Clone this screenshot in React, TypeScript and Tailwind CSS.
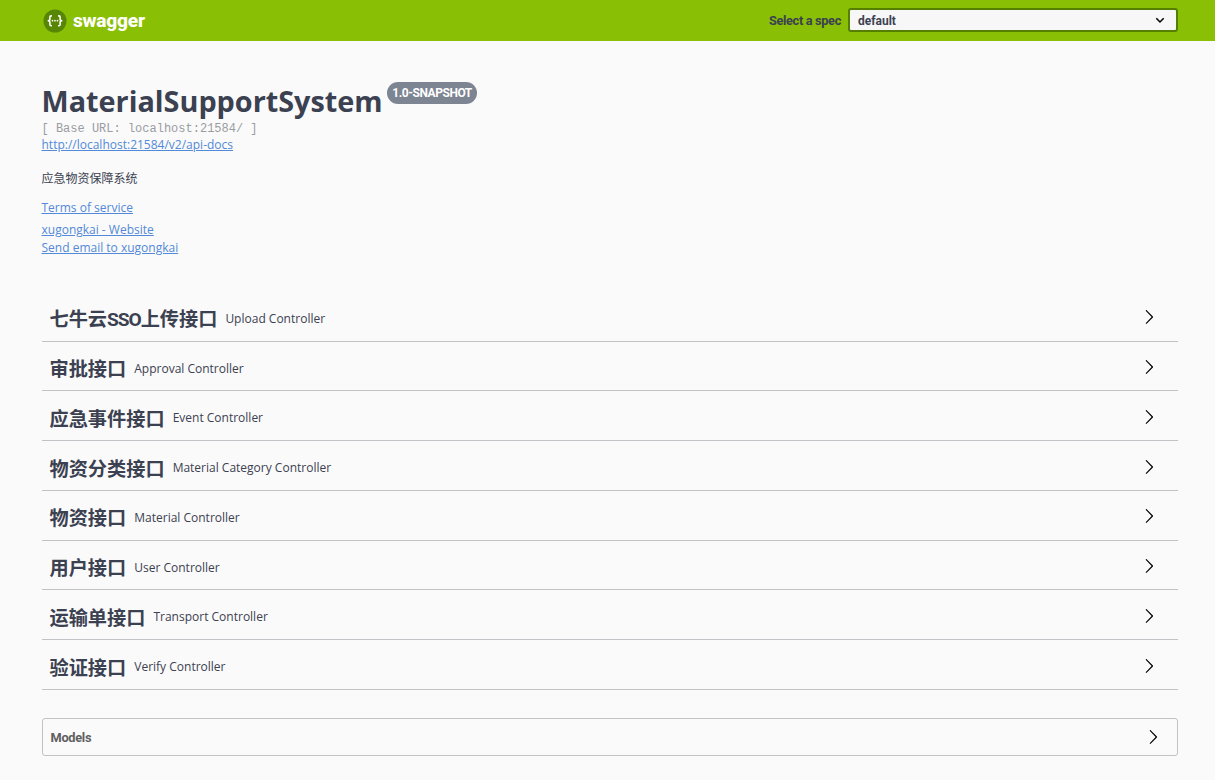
type Tag = { name: string; description: string };

const tags: Tag[] = [
  { name: '七牛云SSO上传接口', description: 'Upload Controller' },
  { name: '审批接口', description: 'Approval Controller' },
  { name: '应急事件接口', description: 'Event Controller' },
  { name: '物资分类接口', description: 'Material Category Controller' },
  { name: '物资接口', description: 'Material Controller' },
  { name: '用户接口', description: 'User Controller' },
  { name: '运输单接口', description: 'Transport Controller' },
  { name: '验证接口', description: 'Verify Controller' },
];

function Chevron() {
  return (
    <svg className="h-4 w-4 shrink-0" viewBox="0 0 20 20" fill="#000">
      <path d="M13.25 10L6.109 2.58c-.268-.27-.268-.707 0-.979.268-.27.701-.27.969 0l7.83 7.908c.268.271.268.709 0 .979l-7.83 7.908c-.268.271-.701.27-.969 0-.268-.269-.268-.707 0-.979L13.25 10z" />
    </svg>
  );
}

function Logo() {
  return (
    <a className="flex items-center">
      <svg className="size-6 shrink-0" viewBox="0 0 24 24" fill="none">
        <circle cx="12" cy="12" r="11.5" fill="#578504" />
        <path
          d="M8.9 6.9H8.1Q6.9 6.9 6.9 8.1v2.1Q6.9 11.7 4.7 11.7q2.2 0 2.2 1.6v2.1q0 1.3 1.2 1.3h.8M15.1 6.9h.8q1.2 0 1.2 1.2v2.1q0 1.5 2.2 1.5q-2.2 0-2.2 1.6v2.1q0 1.3-1.2 1.3h-.8"
          stroke="#fff"
          strokeWidth="1.6"
        />
        <circle cx="9.5" cy="11.7" r=".85" fill="#fff" />
        <circle cx="12" cy="11.7" r=".85" fill="#fff" />
        <circle cx="14.5" cy="11.7" r=".85" fill="#fff" />
      </svg>
      <span className="ml-[6px] font-['Roboto',sans-serif] text-[19.2px] leading-6 font-extrabold tracking-[-0.25px] text-white">swagger</span>
    </a>
  );
}

function Topbar() {
  return (
    <header className="flex h-[41px] items-center justify-between bg-[#89bf04] pr-[37px] pl-[43px]">
      <Logo />
      <label className="flex items-center pb-px font-['Roboto',sans-serif]">
        <span className="pt-[2px] text-[12.8px] font-bold tracking-[-0.35px] text-[#3b4151]">Select a spec</span>
        <span className="ml-[7px] flex h-6 w-[330px] items-center justify-between rounded-[3px] border-2 border-[#547f00] bg-[#f7f7f7] pr-[10px] pl-2">
          <span className="pt-px text-[12px] font-bold text-[#3b4151]">default</span>
          <svg className="size-3" viewBox="0 0 12 12" fill="none" stroke="#000" strokeWidth="1.5">
            <path d="M2.3 4.3L6 8l3.7-3.7" />
          </svg>
        </span>
      </label>
    </header>
  );
}

function Info() {
  return (
    <section className="h-[250.9px] pt-[42px] text-[12px] text-[#5289d8]">
      <h1 className="-ml-[0.5px] flex h-[36px] items-start text-[28.8px] leading-[35px] font-bold text-[#3b4151]">
        MaterialSupportSystem
        <span className="-mt-px ml-[4.5px] flex h-[22px] w-[90px] items-center justify-center rounded-full bg-[#7d8492] font-['Roboto',sans-serif] text-[12px] font-bold tracking-[-0.45px] text-white">
          1.0-SNAPSHOT
        </span>
      </h1>
      <pre className="-ml-[0.5px] h-[17px] pt-px font-['Liberation_Mono',monospace] text-[12px] leading-[18px] text-[#9a9ca2]">[ Base URL: localhost:21584/ ]</pre>
      <a className="-ml-[0.5px] block h-[17px] leading-[17px] underline">http://localhost:21584/v2/api-docs</a>
      <p className="-ml-[0.5px] mt-[17px] leading-[18px] text-[#3b4151]">应急物资保障系统</p>
      <a className="-ml-[0.5px] mt-[11px] block leading-[18px] underline">Terms of service</a>
      <a className="-ml-[0.5px] mt-1 block leading-[18px] underline">xugongkai - Website</a>
      <a className="-ml-[0.5px] block leading-[18px] underline">Send email to xugongkai</a>
    </section>
  );
}

export default function App() {
  return (
    <div className="h-[780px] overflow-hidden bg-[#fafafa] font-['Open_Sans','Noto_Sans_CJK_SC',sans-serif]">
      <Topbar />
      <main className="pr-[37px] pl-[42px]">
        <Info />
        {tags.map((tag) => (
          <div key={tag.name} className="flex h-[49.77px] items-center border-b border-[#3b4151]/30 pt-[2px] pr-[21px] pl-[7.5px]">
            <h2 className="pt-1 text-[19.2px] leading-6 font-bold text-[#3b4151]">
              {tag.name.split(/([A-Z]+)/).map((part, i) =>
                /[A-Z]/.test(part) ? (
                  <span key={i} className="font-['Roboto',sans-serif] tracking-[-1.1px]">
                    {part}
                  </span>
                ) : (
                  part
                ),
              )}
            </h2>
            <span className="ml-2 flex-1 pt-[3px] text-[12px] leading-6 text-[#3b4151]">{tag.description}</span>
            <Chevron />
          </div>
        ))}
        <section className="mt-7 flex h-[38px] items-center justify-between rounded-[3px] border border-[#3b4151]/30 pr-4 pl-[7.5px]">
          <h3 className="pt-px font-['Roboto',sans-serif] text-[12.8px] font-bold tracking-[-0.3px] text-[#606060]">Models</h3>
          <Chevron />
        </section>
      </main>
    </div>
  );
}
